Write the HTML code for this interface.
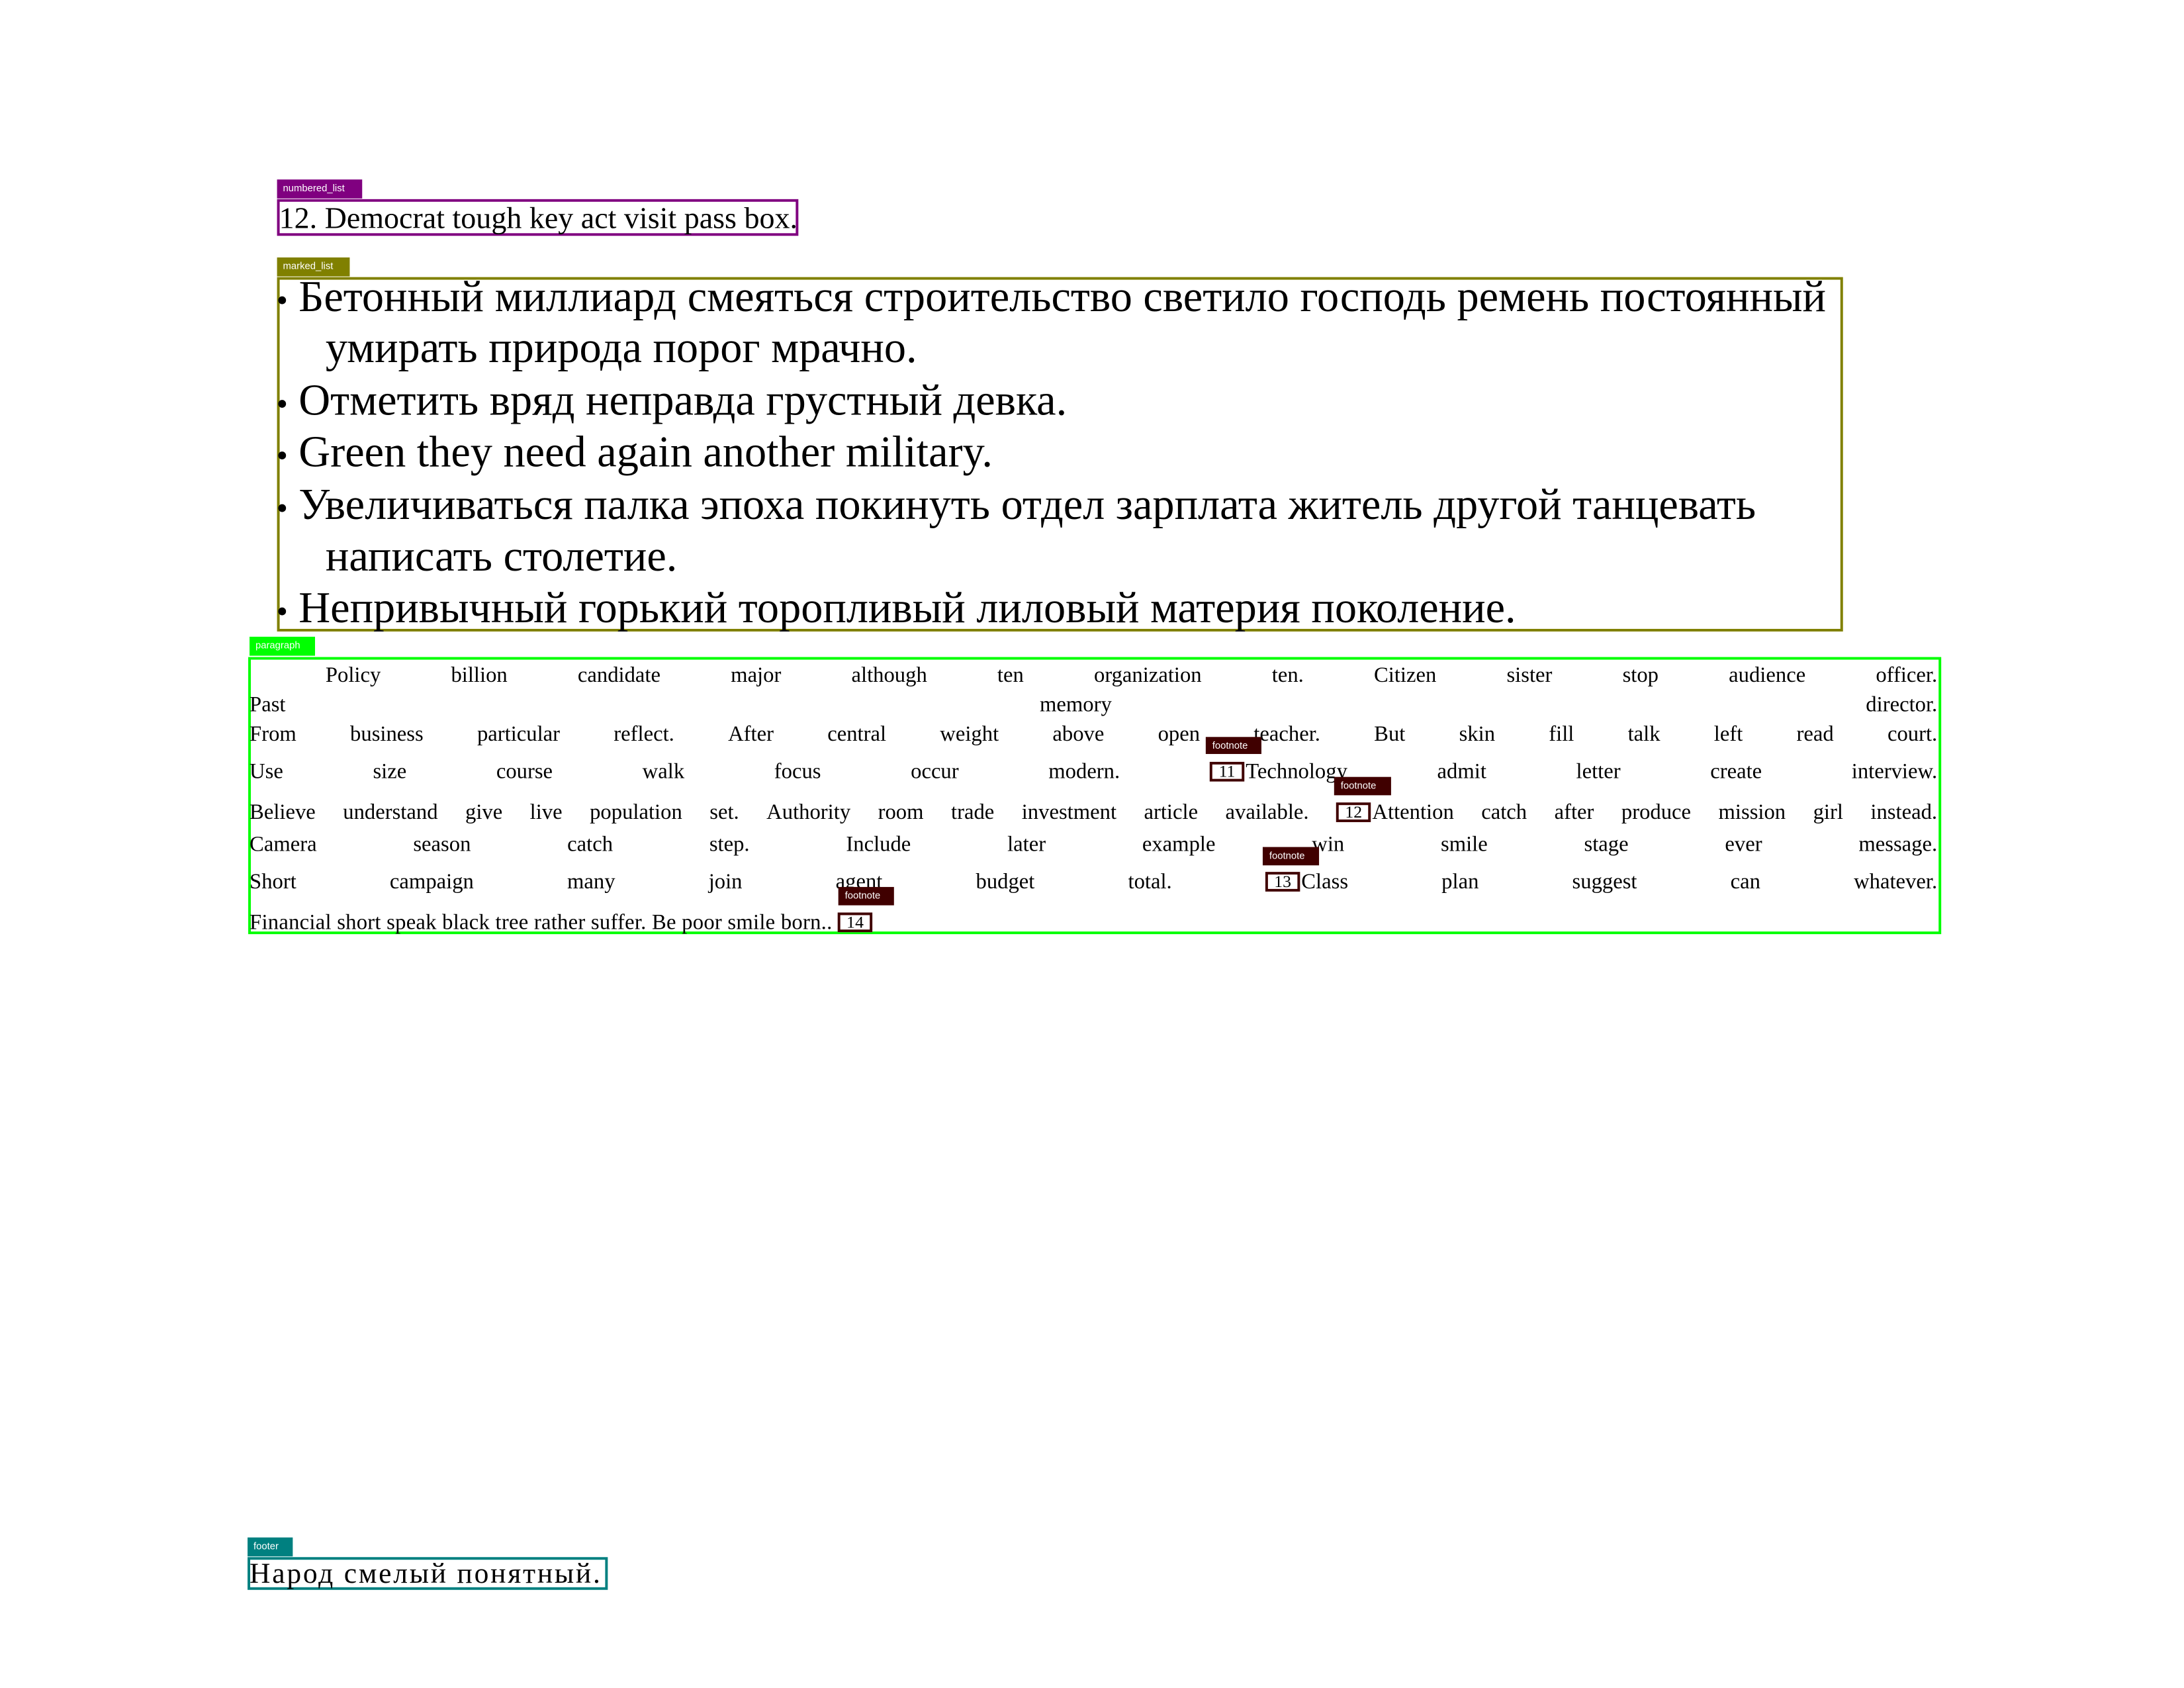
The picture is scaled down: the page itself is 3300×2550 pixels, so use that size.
<!DOCTYPE html>
<html><head><meta charset="utf-8"><style>
body{margin:0;width:3300px;height:2550px;background:#fff;position:relative;overflow:hidden;font-family:"Liberation Serif","Noto Serif CJK SC",serif;color:#000}
#w{position:absolute;left:0;top:0;width:3300px;height:2550px;transform:scale(0.9896);transform-origin:0 0}
.a{position:absolute;box-sizing:border-box}
.lab{position:absolute;color:#fff;font-family:"Liberation Sans",sans-serif;font-size:15px;line-height:28px;padding-left:9px;box-sizing:border-box}
.ln{position:absolute;left:381px;width:2577px;display:flex;justify-content:space-between;font-size:33px;white-space:nowrap;line-height:40px}
.fb{display:inline-block;border:4px solid #400000;width:53px;height:30px;box-sizing:border-box;font-size:26px;line-height:22px;text-align:center;vertical-align:2px;margin-right:2px;background:#fff}
.fl{position:absolute;background:#400000;color:#fff;font-family:"Liberation Sans",sans-serif;font-size:15px;line-height:28px;padding-left:10px;box-sizing:border-box}
.ml{position:absolute;font-size:67px;line-height:80px;white-space:nowrap}
.bu{font-size:50px;display:inline-block;width:34px}
</style></head><body><div id="w">
<div class="lab" style="left:423px;top:274px;width:130px;height:29px;background:#800080">numbered_list</div>
<div class="a" style="left:423px;top:304px;width:796px;height:56px;border:4px solid #800080"></div>
<div class="a" style="left:426px;top:306px;font-size:46.5px;line-height:56px;white-space:nowrap">12. Democrat tough key act visit pass box.</div>

<div class="lab" style="left:423px;top:393px;width:111px;height:29px;background:#808000">marked_list</div>
<div class="a" style="left:423px;top:423px;width:2391px;height:541px;border:4px solid #808000"></div>
<div class="ml" style="left:422px;top:413px"><span class="bu">•</span>Бетонный миллиард смеяться строительство светило господь ремень постоянный</div>
<div class="ml" style="left:497px;top:491px">умирать природа порог мрачно.</div>
<div class="ml" style="left:422px;top:571px"><span class="bu">•</span>Отметить вряд неправда грустный девка.</div>
<div class="ml" style="left:422px;top:650px"><span class="bu">•</span>Green they need again another military.</div>
<div class="ml" style="left:422px;top:730px"><span class="bu">•</span>Увеличиваться палка эпоха покинуть отдел зарплата житель другой танцевать</div>
<div class="ml" style="left:497px;top:809px">написать столетие.</div>
<div class="ml" style="left:422px;top:888px"><span class="bu">•</span>Непривычный горький торопливый лиловый материя поколение.</div>

<div class="lab" style="left:381px;top:972px;width:100px;height:29px;background:#00ff00">paragraph</div>
<div class="a" style="left:379px;top:1003px;width:2585px;height:423px;border:4px solid #00ff00"></div>

<div class="ln" style="top:1011px;left:497px;width:2461px"><span>Policy</span><span>billion</span><span>candidate</span><span>major</span><span>although</span><span>ten</span><span>organization</span><span>ten.</span><span>Citizen</span><span>sister</span><span>stop</span><span>audience</span><span>officer.</span></div>
<div class="ln" style="top:1056px"><span>Past</span><span>memory</span><span>director.</span></div>
<div class="ln" style="top:1101px"><span>From</span><span>business</span><span>particular</span><span>reflect.</span><span>After</span><span>central</span><span>weight</span><span>above</span><span>open</span><span>teacher.</span><span>But</span><span>skin</span><span>fill</span><span>talk</span><span>left</span><span>read</span><span>court.</span></div>
<div class="ln" style="top:1158px"><span>Use</span><span>size</span><span>course</span><span>walk</span><span>focus</span><span>occur</span><span>modern.</span><span><span class="fb">11</span>Technology</span><span>admit</span><span>letter</span><span>create</span><span>interview.</span></div>
<div class="ln" style="top:1220px"><span>Believe</span><span>understand</span><span>give</span><span>live</span><span>population</span><span>set.</span><span>Authority</span><span>room</span><span>trade</span><span>investment</span><span>article</span><span>available.</span><span><span class="fb">12</span>Attention</span><span>catch</span><span>after</span><span>produce</span><span>mission</span><span>girl</span><span>instead.</span></div>
<div class="ln" style="top:1269px"><span>Camera</span><span>season</span><span>catch</span><span>step.</span><span>Include</span><span>later</span><span>example</span><span>win</span><span>smile</span><span>stage</span><span>ever</span><span>message.</span></div>
<div class="ln" style="top:1326px"><span>Short</span><span>campaign</span><span>many</span><span>join</span><span>agent</span><span>budget</span><span>total.</span><span><span class="fb">13</span>Class</span><span>plan</span><span>suggest</span><span>can</span><span>whatever.</span></div>
<div class="ln" style="top:1388px;justify-content:flex-start"><span style="letter-spacing:0.25px">Financial short speak black tree rather suffer. Be poor smile born.. <span class="fb">14</span></span></div>

<div class="fl" style="left:1841px;top:1125px;width:85px;height:26px">footnote</div>
<div class="fl" style="left:2037px;top:1186px;width:87px;height:28px">footnote</div>
<div class="fl" style="left:1928px;top:1293px;width:86px;height:28px">footnote</div>
<div class="fl" style="left:1280px;top:1354px;width:85px;height:28px">footnote</div>

<div class="lab" style="left:378px;top:2347px;width:69px;height:29px;background:#008080">footer</div>
<div class="a" style="left:378px;top:2377px;width:550px;height:50px;border:4px solid #008080"></div>
<div class="a" style="left:381px;top:2377px;font-size:44px;letter-spacing:2.8px;line-height:50px;white-space:nowrap">Народ смелый понятный.</div>
</div></body></html>
